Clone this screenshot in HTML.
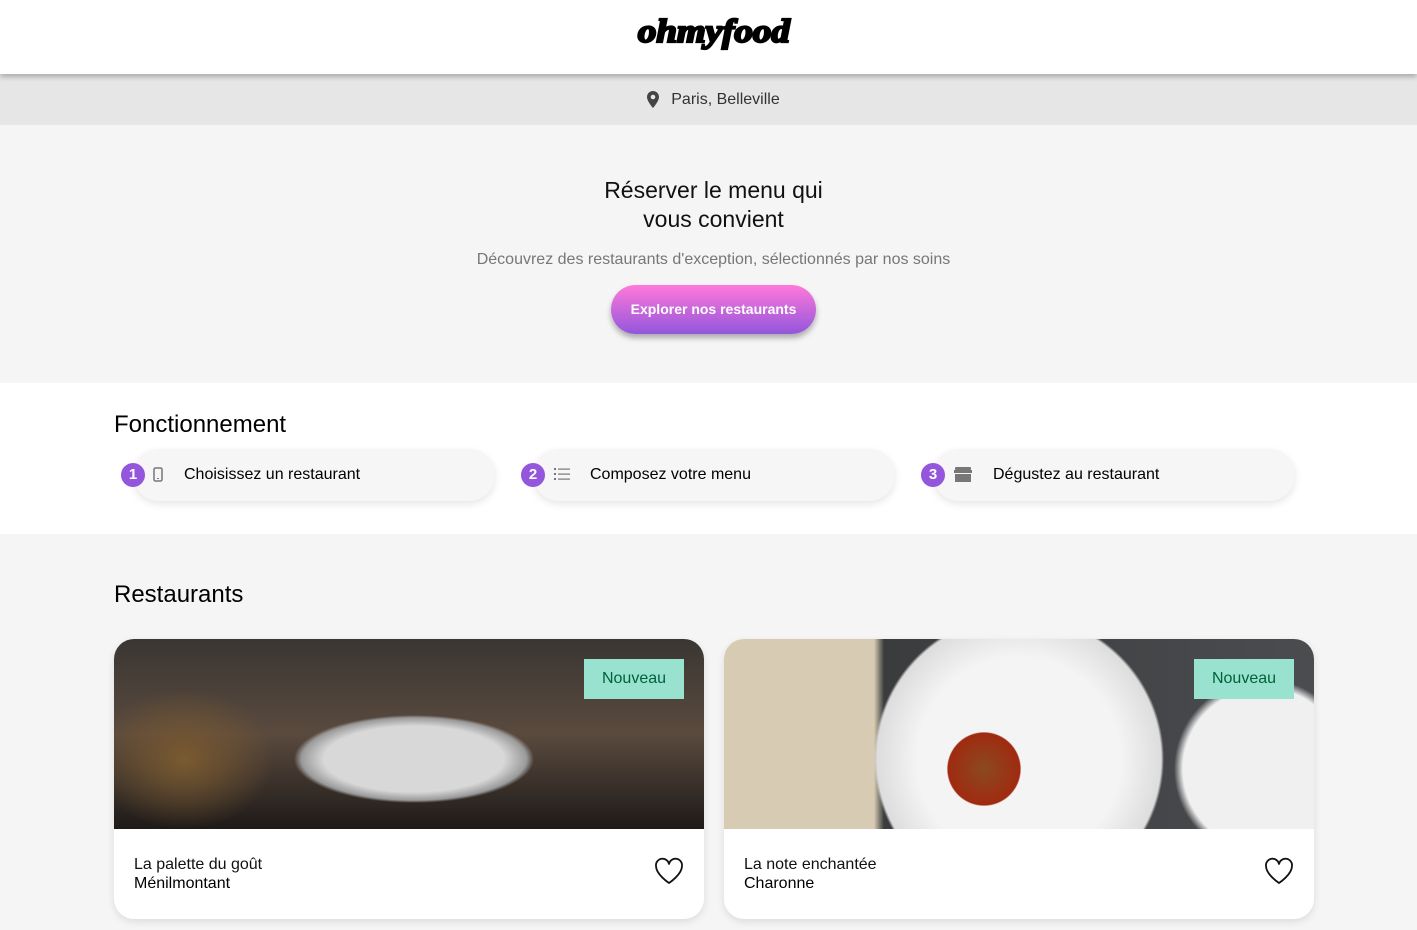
<!DOCTYPE html>
<html><head><meta charset="utf-8"><style>
*{margin:0;padding:0;box-sizing:border-box}
body{width:1417px;height:930px;overflow:hidden;font-family:"Liberation Sans",sans-serif;background:#f5f5f5;color:#000}
header{height:74px;background:#fff;text-align:center;position:relative;z-index:2;box-shadow:0 3px 5px rgba(0,0,0,.25);padding-left:10px}
.logo{font-family:"Liberation Serif",serif;font-weight:900;font-style:italic;font-size:33px;line-height:64px;letter-spacing:0px;-webkit-text-stroke:2.2px #000;display:inline-block;transform:scaleX(1.12)}
.loc{height:51px;background:#e6e6e6;display:flex;align-items:center;justify-content:center;font-size:16px;color:#333;gap:12px;padding-left:10px}
.hero{height:258px;text-align:center;padding-top:51px;padding-left:10px}
.hero h1{font-size:23px;font-weight:normal;line-height:29px;color:#111}
.hero p{color:#777;font-size:16px;margin-top:17px}
.btn{display:inline-block;margin-top:16px;width:205px;height:49px;line-height:49px;border-radius:25px;background:linear-gradient(#ff79da,#9356dc);color:#fff;font-size:14px;font-weight:bold;box-shadow:0 4px 6px rgba(0,0,0,.3)}
.fn{background:#fff;height:151px;padding:28px 0 0 114px;position:relative}
h2{font-size:24px;font-weight:normal}
.step{position:absolute;top:66px;width:362px;height:52px;border-radius:26px;background:#f6f6f6;box-shadow:0 3px 8px rgba(0,0,0,.1);font-size:16px}
.num{position:absolute;left:-12px;top:14px;width:24px;height:24px;border-radius:50%;background:#9356dc;color:#fff;font-weight:bold;font-size:15px;text-align:center;line-height:24px}
.ic{position:absolute;top:18px}
.t{position:absolute;top:17px}
.rest{padding:47px 0 0 114px}
.cards{display:flex;gap:20px;margin-top:30px}
.card{width:590px;height:280px;border-radius:20px;background:#fff;overflow:hidden;position:relative;box-shadow:0 3px 8px rgba(0,0,0,.1)}
.img{height:190px;position:relative}
.tag{position:absolute;right:20px;top:20px;width:100px;height:40px;line-height:40px;text-align:center;background:#99e2d0;color:#00613b;font-size:16px}
.info{padding:26px 20px;font-size:16px;line-height:19px}
.info b{font-weight:normal;color:#111}
.info div+div{color:#333}
.heart{position:absolute;right:20px;top:218px}
</style></head><body>
<header><span class="logo">ohmyfood</span></header>
<div class="loc"><svg width="12" height="17" viewBox="0 0 12 17"><path d="M6 0C2.7 0 0 2.6 0 6c0 4.3 6 11 6 11s6-6.7 6-11C12 2.6 9.3 0 6 0zm0 8.3A2.3 2.3 0 1 1 6 3.7a2.3 2.3 0 0 1 0 4.6z" fill="#444"/></svg><span>Paris, Belleville</span></div>
<div class="hero"><h1>Réserver le menu qui<br>vous convient</h1><p>Découvrez des restaurants d'exception, sélectionnés par nos soins</p><div class="btn">Explorer nos restaurants</div></div>
<div class="fn"><h2>Fonctionnement</h2>
<div class="step" style="left:133px"><div class="num">1</div><svg class="ic" style="left:20px" width="10" height="15" viewBox="0 0 10 15"><rect x="1" y="1" width="8" height="13" rx="1.5" fill="none" stroke="#777" stroke-width="1.5"/><line x1="4" y1="11.5" x2="6" y2="11.5" stroke="#777"/></svg><span class="t" style="left:51px">Choisissez un restaurant</span></div>
<div class="step" style="left:533px"><div class="num">2</div><svg class="ic" style="left:21px" width="16" height="14" viewBox="0 0 16 14"><g fill="#777"><rect x="0" y="1" width="2" height="2"/><rect x="0" y="6" width="2" height="2"/><rect x="0" y="11" width="2" height="2"/><rect x="4" y="1.5" width="12" height="1.2"/><rect x="4" y="6.5" width="12" height="1.2"/><rect x="4" y="11.5" width="12" height="1.2"/></g></svg><span class="t" style="left:57px">Composez votre menu</span></div>
<div class="step" style="left:933px"><div class="num">3</div><svg class="ic" style="left:21px" width="18" height="15" viewBox="0 0 18 15"><g fill="#777"><rect x="1" y="0" width="16" height="3" rx="1"/><rect x="0" y="3" width="18" height="3"/><rect x="1" y="7" width="16" height="8"/></g></svg><span class="t" style="left:60px">Dégustez au restaurant</span></div>
</div>
<div class="rest"><h2>Restaurants</h2>
<div class="cards">
<div class="card"><div class="img" style="background:radial-gradient(ellipse 150px 55px at 300px 120px,#d8d8d8 60%,#9a9a9a 75%,transparent 80%),radial-gradient(ellipse 90px 70px at 70px 120px,#7a5a30,transparent),linear-gradient(#3a3632,#5a4a3e 50%,#1e1a18)"><div class="tag">Nouveau</div></div>
<div class="info"><b>La palette du goût</b><div>Ménilmontant</div></div>
<svg class="heart" width="30" height="28" viewBox="0 0 30 28"><path d="M15 26S2 17.5 2 9a6.5 6.5 0 0 1 13-1.5A6.5 6.5 0 0 1 28 9c0 8.5-13 17-13 17z" fill="none" stroke="#111" stroke-width="1.8"/></svg></div>
<div class="card"><div class="img" style="background:radial-gradient(circle 60px at 260px 130px,#8a4a20,#a02a10 60%,transparent 62%) 0 0/100% 100%,radial-gradient(circle 145px at 295px 120px,#f4f4f4 70%,#ddd 98%,transparent 100%),radial-gradient(circle 90px at 540px 130px,#f0f0f0 90%,transparent 100%),linear-gradient(90deg,#d8cbb3 0,#d8cbb3 150px,#3a3c3e 160px,#4a4c4f)"><div class="tag">Nouveau</div></div>
<div class="info"><b>La note enchantée</b><div>Charonne</div></div>
<svg class="heart" width="30" height="28" viewBox="0 0 30 28"><path d="M15 26S2 17.5 2 9a6.5 6.5 0 0 1 13-1.5A6.5 6.5 0 0 1 28 9c0 8.5-13 17-13 17z" fill="none" stroke="#111" stroke-width="1.8"/></svg></div>
</div></div>
</body></html>
